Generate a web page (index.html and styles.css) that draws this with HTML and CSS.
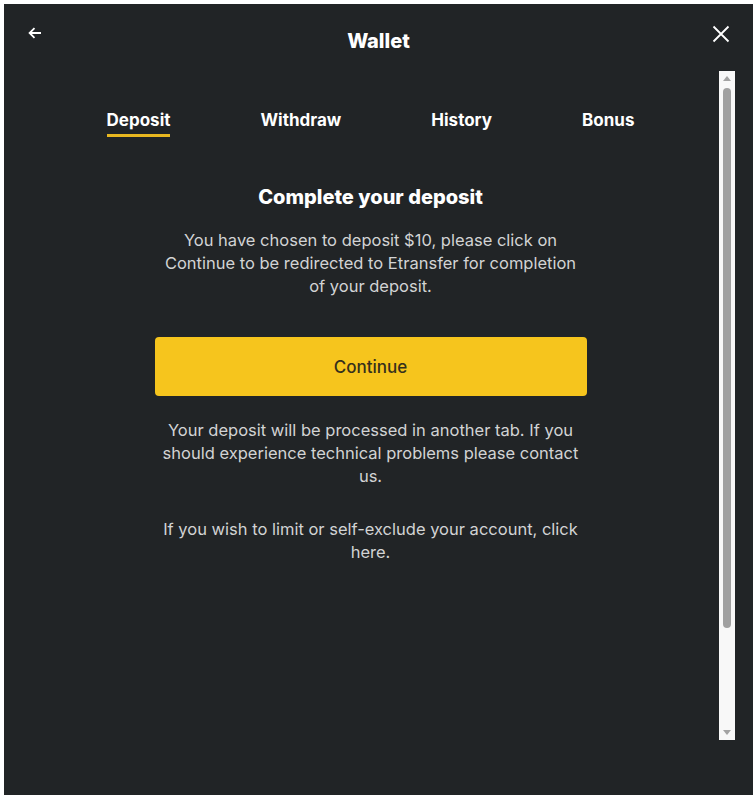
FILE: index.html
```html
<!DOCTYPE html>
<html lang="en" dir="ltr">
    <head>
        <meta charset="utf-8">
        <title>Wallet</title>
        <link rel="stylesheet" href="styles.css">
    </head>
    <body>
        <div class="wallet">
            <div class="header">
                <button type="button" class="icon-btn back" aria-label="Back">
                    <svg width="14" height="12" viewBox="0 0 14 12"><path d="M13 6H1.8M6.5 1.2L1.6 6l4.9 4.8" fill="none" stroke="#fff" stroke-width="1.8"/></svg>
                </button>
                <h1 class="title">Wallet</h1>
                <button type="button" class="icon-btn close" aria-label="Close">
                    <svg width="18" height="18" viewBox="0 0 18 18"><path d="M1.5 1.5l15 15M16.5 1.5l-15 15" fill="none" stroke="#fff" stroke-width="1.8"/></svg>
                </button>
            </div>
            <div class="scroll">
                <div class="content">
                    <nav class="tabs">
                        <a href="#" class="tab active">Deposit</a>
                        <a href="#" class="tab">Withdraw</a>
                        <a href="#" class="tab">History</a>
                        <a href="#" class="tab">Bonus</a>
                    </nav>
                    <div class="deposit">
                        <h2>Complete your deposit</h2>
                        <p>You have chosen to deposit $10, please click on Continue to be redirected to Etransfer for completion of your deposit.</p>
                        <button type="button" class="continue">Continue</button>
                        <p class="note">Your deposit will be processed in another tab. If you should experience technical problems please contact us.</p>
                        <p class="limit">If you wish to limit or self-exclude your account, click here.</p>
                    </div>
                </div>
                <div class="scrollbar">
                    <span class="arrow up"></span>
                    <span class="thumb"></span>
                    <span class="arrow down"></span>
                </div>
            </div>
        </div>
    </body>
</html>
```

FILE: styles.css
```css
*{
    box-sizing: border-box;
}
body{
    margin: 0;
    padding: 0;
    background: #fff;
    font-family: Inter, "Open Sans", sans-serif;
}
.wallet{
    margin: 4px 0 4px 4px;
    height: 791px;
    background: #212426;
    color: #fff;
    display: flex;
    flex-direction: column;
}
.header{
    height: 67px;
    display: grid;
    grid-template-columns: 1fr auto 1fr;
    align-items: start;
}
.icon-btn{
    background: none;
    border: 0;
    padding: 0;
    cursor: pointer;
    display: flex;
}
.back{
    margin: 23px 0 0 24px;
    justify-self: start;
}
.close{
    margin: 21px 23px 0 0;
    justify-self: end;
}
.title{
    margin: 25px 0 0;
    font-size: 20px;
    line-height: 24px;
    font-weight: 800;
}
.scroll{
    display: flex;
    padding-left: 18px;
    height: 669px;
}
.content{
    flex: 1;
    display: flex;
    flex-direction: column;
    align-items: center;
}
.tabs{
    display: flex;
    gap: 90px;
    margin-top: 38px;
}
.tab{
    color: #fff;
    text-decoration: none;
    font-size: 17px;
    line-height: 22px;
    font-weight: 700;
    padding-bottom: 3px;
    border-bottom: 3px solid transparent;
}
.tab.active{
    border-bottom-color: #e8b720;
}
.deposit{
    width: 432px;
    text-align: center;
}
.deposit h2{
    margin: 48px 0 0;
    font-size: 20px;
    line-height: 24px;
    font-weight: 800;
}
.deposit p{
    max-width: 425px;
    margin: 20px auto 0;
    font-size: 16.5px;
    line-height: 23px;
    color: #d2d3d4;
}
.continue{
    display: block;
    width: 100%;
    height: 59px;
    margin-top: 39px;
    border: 0;
    border-radius: 4px;
    background: #f6c51d;
    color: #35301c;
    font-family: inherit;
    font-size: 17px;
    font-weight: 500;
}
.deposit p.note{
    margin-top: 23px;
}
.deposit p.limit{
    margin-top: 30px;
}
.scrollbar{
    width: 16px;
    margin-right: 18px;
    background: #f8f8f8;
    display: flex;
    flex-direction: column;
    align-items: center;
    padding: 5px 0;
}
.arrow{
    width: 0;
    height: 0;
    border-left: 4px solid transparent;
    border-right: 4px solid transparent;
}
.arrow.up{
    border-bottom: 5px solid #a3a3a3;
}
.arrow.down{
    border-top: 5px solid #a3a3a3;
    margin-top: auto;
}
.thumb{
    width: 8px;
    height: 540px;
    margin-top: 7px;
    border-radius: 4px;
    background: #a0a0a0;
}
```
